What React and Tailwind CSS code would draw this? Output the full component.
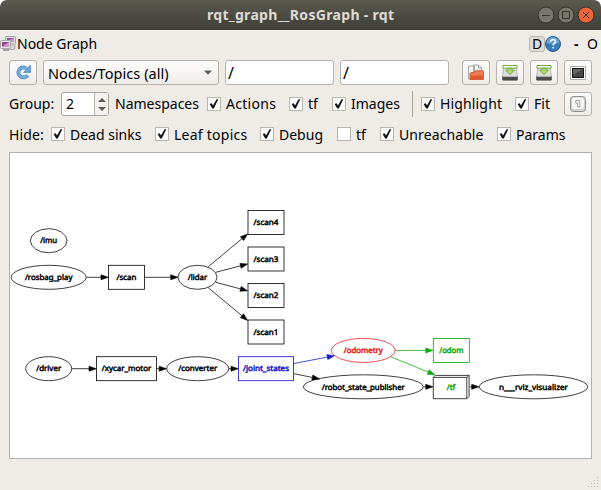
import React from 'react';

const BTN = 'flex h-[25px] w-7 shrink-0 items-center justify-center rounded-[3px] border border-[#b5b1ab] bg-gradient-to-b from-[#fdfdfc] to-[#efedea]';
const FIELD = 'flex h-[25px] shrink-0 items-center rounded-[3px] border border-[#b5b1ab] bg-white text-[16px]';

function Check({ label, className, on = true, text = '' }) {
  return (
    <label className={'flex shrink-0 items-center whitespace-nowrap ' + className}>
      <span className="mr-[5px] flex h-[14px] w-[14px] shrink-0 items-center justify-center border border-[#b9b5af] bg-white">
        {on && (
          <svg width="12" height="12" viewBox="0 0 12 12">
            <path d="M1.6 6 3.7 5.2 5 7.6 8.4 1.5 10.4 1 5.8 10.5H4.2Z" fill="#111" />
          </svg>
        )}
      </span>
      <span className={text}>{label}</span>
    </label>
  );
}

function SaveIcon() {
  return (
    <svg width="16" height="17" viewBox="0 0 16 17">
      <path d="M1.8 3.5h12.4l1.2 9H.6Z" fill="#dededc" stroke="#a0a09d" strokeWidth=".7" />
      <path d="M.5 12.4h15v3q0 .9-.9.9H1.4q-.9 0-.9-.9Z" fill="#4b4d4b" stroke="#3b3d3b" strokeWidth=".5" />
      <path d="M.8 12.2h14.4" stroke="#f7f7f7" strokeWidth=".8" />
      <path d="M1 1.5h14v2.6H1Z" fill="#fff" stroke="#72aa3e" strokeWidth="1" />
      <path d="M6 4.1h4v2h2.4L8 10.8 3.6 6.1H6Z" fill="#acd66a" stroke="#69a53a" strokeWidth=".8" />
    </svg>
  );
}

const nodes = [
  ['/imu', 'e', 48.7, 240.7, 18.3, 17],
  ['/rosbag_play', 'e', 48.7, 277.3, 37.5, 47.5],
  ['/scan', 'r', 126.5, 277.3, 18, 20],
  ['/lidar', 'e', 197.5, 277.3, 19.5, 19.5],
  ['/scan4', 'r', 266, 222.5, 18, 25],
  ['/scan3', 'r', 266, 259, 18, 25],
  ['/scan2', 'r', 266, 295.5, 18, 25],
  ['/scan1', 'r', 266, 332, 18, 25],
  ['/driver', 'e', 48.7, 368.7, 23, 25],
  ['/xycar_motor', 'r', 126.5, 368.7, 30, 49.5],
  ['/converter', 'e', 197.7, 368.7, 31, 39],
  ['/joint_states', 'r', 266, 368.7, 27.5, 46, '#1010c8'],
  ['/odometry', 'e', 363.3, 350.4, 31.8, 39, '#f01818'],
  ['/robot_state_publisher', 'e', 363.3, 386.8, 60, 83],
  ['/odom', 'r', 451.3, 350.4, 18, 24, '#08a808'],
  ['n___rviz_visualizer', 'e', 533.5, 386.8, 54.3, 69],
];

const edges = [
  [86.5, 277.3, 108.3, 277.3],
  [144.5, 277.3, 178, 277.3],
  [208.3, 266.7, 247.6, 234],
  [215.8, 272.3, 247.6, 264],
  [215.8, 282.3, 247.6, 290.8],
  [208.3, 287.8, 247.6, 320.4],
  [71.8, 368.7, 96.3, 368.7],
  [156.7, 368.7, 166.5, 368.7],
  [229, 368.7, 238.3, 368.7],
  [293.5, 363.6, 334.5, 355.7, '#1010c8'],
  [293.5, 373.6, 319.5, 378.9],
  [395.3, 350.4, 433, 350.4, '#08a808'],
  [390.5, 356.7, 435, 374.8, '#08a808'],
  [423.5, 386.8, 433, 386.8],
  [469.5, 386.8, 479, 386.8],
];

function Edge({ x1, y1, x2, y2, color }) {
  const d = Math.hypot(x2 - x1, y2 - y1);
  const ux = (x2 - x1) / d;
  const uy = (y2 - y1) / d;
  const bx = x2 - ux * 7.3;
  const by = y2 - uy * 7.3;
  return (
    <g stroke={color} fill={color} strokeWidth=".75">
      <line x1={x1} y1={y1} x2={bx} y2={by} />
      <polygon strokeWidth=".6" points={`${x2},${y2} ${bx - uy * 2.5},${by + ux * 2.5} ${bx + uy * 2.5},${by - ux * 2.5}`} />
    </g>
  );
}

function Graph() {
  return (
    <svg className="block" width="581" height="305" viewBox="10 153 581 305" textRendering="geometricPrecision">
      {edges.map(([x1, y1, x2, y2, c = '#000'], i) => (
        <Edge key={i} x1={x1} y1={y1} x2={x2} y2={y2} color={c} />
      ))}
      <path d="M433.3 377.4h33.5v21.3h-33.5ZM433.3 377.4l2-2h33.8v21.2l-2.2 2.1M466.8 377.4l2.3-2" fill="none" stroke="#111" strokeWidth=".8" />
      <text x="451" y="389.5" textAnchor="middle" textLength="8.5" lengthAdjust="spacingAndGlyphs" fontSize="7.8" fill="#08a808" stroke="#08a808" strokeWidth=".45">/tf</text>
      {nodes.map(([t, s, x, y, r, w, c = '#000']) => (
        <g key={t}>
          {s === 'e' ? (
            <ellipse cx={x} cy={y} rx={r} ry="12" fill="none" stroke={c} strokeWidth=".75" />
          ) : (
            <rect x={x - r} y={y - 12} width={r * 2} height="24" fill="none" stroke={c} strokeWidth=".8" />
          )}
          <text x={x} y={y + 2.7} textAnchor="middle" textLength={w} lengthAdjust="spacingAndGlyphs" fontSize="7.8" fill={c} stroke={c} strokeWidth=".45">{t}</text>
        </g>
      ))}
    </svg>
  );
}

export default function App() {
  return (
    <div className="flex h-[490px] w-[601px] flex-col overflow-hidden rounded-t-[7px] bg-[#efebe7] font-['Noto_Sans','Open_Sans',sans-serif] text-[14px] leading-5 text-black">
      <header className="flex h-[30px] shrink-0 items-center bg-gradient-to-b from-[#5b5a50] to-[#3f3e38] pr-[6px]">
        <h1 className="ml-[207px] w-[187px] whitespace-nowrap text-[14px] font-bold tracking-[0.32px] text-[#dfdbd2]">rqt_graph__RosGraph - rqt</h1>
        <svg className="ml-auto" width="58" height="18" viewBox="538 6 58 18">
          <g stroke="#34332e" strokeWidth="1">
            <circle cx="547" cy="15" r="8" fill="#77756c" />
            <circle cx="567" cy="15" r="8" fill="#77756c" />
            <circle cx="587" cy="15" r="8" fill="#ee6338" />
            <path d="M543 15.5h8M563.5 11.5h7v7h-7ZM584 12l6 6M590 12l-6 6" fill="none" />
          </g>
        </svg>
      </header>

      <div className="flex h-[30px] shrink-0 items-center pb-[3px]">
        <svg width="17" height="17" viewBox="0 0 17 17">
          <rect x="5.5" y="1.5" width="10" height="8" rx="1" fill="#dedbdd" stroke="#aaa5a9" />
          <path d="M7 3h7v4H7Z" fill="#9a579b" />
          <path d="M8.5 5.5 14 3v4H8.5Z" fill="#c79bc8" />
          <rect x="8.5" y="9" width="6.5" height="5.5" rx="2" fill="#d8d6d5" stroke="#aaa" />
          <rect x=".5" y="5.5" width="10" height="8" rx="1" fill="#e9e6e8" stroke="#a7a2a6" />
          <path d="M2 7h7v4.5H2Z" fill="#8d478e" />
          <path d="M3.5 10.5 9 7v4.5H3.5Z" fill="#c795c8" />
          <path d="M3 15h6" stroke="#8d8a8b" strokeWidth="1.5" />
        </svg>
        <span className="w-[90px] whitespace-nowrap">Node Graph</span>
        <span className="ml-auto flex h-4 w-4 items-center justify-center rounded-[3px] border border-[#bbb7b2] bg-[#dfdcd8] text-[14px]">D</span>
        <svg width="16" height="16" viewBox="0 0 16 16">
          <circle cx="8" cy="8" r="7.5" fill="#397bb9" stroke="#285d92" />
          <path d="M1.5 7a6.5 6 0 0 1 13 0Q8 9 1.5 7Z" fill="#6ba2d3" />
          <path d="M5.6 5.8Q5.7 3.5 8.1 3.5t2.4 2.2c0 1.7-2.4 1.6-2.4 3.8M8.1 11v1.5" fill="none" stroke="#fff" strokeWidth="1.5" />
        </svg>
        <span className="ml-[13px] w-[13px] font-bold">-</span>
        <span className="w-[14px]">O</span>
      </div>

      <div className="flex h-[25px] shrink-0 items-center gap-[6px] pl-[9px]">
        <button className={BTN}>
          <svg width="17" height="17" viewBox="0 0 17 17">
            <path d="M12.6 11.2A5 5 0 1 1 11.6 4.6" fill="none" stroke="#4e87c0" strokeWidth="3.8" />
            <path d="M15.5 1.2v7.2H8.6Z" fill="#68a2d8" stroke="#4e87c0" strokeWidth=".8" />
            <path d="M12.6 11.2A5 5 0 1 1 11.6 4.6" fill="none" stroke="#78ade0" strokeWidth="2.2" />
          </svg>
        </button>
        <button className={FIELD + ' w-44 justify-between bg-gradient-to-b from-[#fdfdfc] to-[#efedea] pr-[6px] pl-[4px]'}>
          <span className="whitespace-nowrap text-[14.5px] tracking-[0.06px]">Nodes/Topics (all)</span>
          <svg width="8" height="5" viewBox="0 0 8 5"><path d="M0 .5h8L4 4.8Z" fill="#5a5955" /></svg>
        </button>
        <div className={FIELD + ' w-[109px] pl-[2px]'}>/</div>
        <div className={FIELD + ' w-[109px] pl-[2px]'}>/</div>
        <button className={BTN + ' ml-[7px]'}>
          <svg width="18" height="18" viewBox="0 0 18 18">
            <path d="M1.5 2h6v13h-6ZM6.5 1h5l3 3v8h-8Z" fill="#f4f4f3" stroke="#969694" strokeWidth=".8" />
            <path d="M11.5 1v3h3" fill="none" stroke="#969694" strokeWidth=".8" />
            <path d="M3 15.5V9.5l.8-.9h3.4l1-1.8h7.6l.7.9v7.8Z" fill="#ef7b50" stroke="#cb4b25" strokeWidth=".8" />
            <path d="M3.5 15V11.5H16V15Z" fill="#df5930" />
          </svg>
        </button>
        <button className={BTN}><SaveIcon /></button>
        <button className={BTN}><SaveIcon /></button>
        <button className={BTN}>
          <svg width="16" height="14" viewBox="0 0 16 14">
            <path d="M.5.5h15v13H.5Z" fill="#fff" stroke="#aaa" />
            <path d="M2.5 2.5h11v9h-11Z" fill="#464646" stroke="#111" />
            <path d="M3 3h10L3 9Z" fill="#686868" />
          </svg>
        </button>
      </div>

      <div className="mt-[6px] flex h-[26px] shrink-0 items-center pl-[9px]">
        <span className="w-[52px]">Group:</span>
        <div className="flex h-6 w-12 rounded-[3px] border border-[#aaa69f] bg-white">
          <span className="flex w-8 items-center pl-1">2</span>
          <span className="flex flex-1 flex-col items-center justify-center gap-[5px] border-l border-[#b5b1ab] bg-[#f5f3f1]">
            <svg width="8" height="4" viewBox="0 0 8 4"><path d="M0 4h8L4 0Z" fill="#5a5955" /></svg>
            <svg width="8" height="4" viewBox="0 0 8 4"><path d="M0 0h8L4 4Z" fill="#5a5955" /></svg>
          </span>
        </div>
        <span className="ml-[6px] w-[92px] whitespace-nowrap">Namespaces</span>
        <div className="flex items-center">
          <Check label="Actions" className="w-[82px]" text="tracking-[0.3px]" />
          <Check label="tf" className="w-[43px]" />
          <Check label="Images" className="w-[80px]" />
        </div>
        <span className="h-[26px] w-px bg-[#aaa69f]" />
        <Check label="Highlight" className="ml-2 w-[94px]" text="tracking-[0.15px]" />
        <Check label="Fit" className="w-[49px]" />
        <button className="flex h-6 w-7 items-center justify-center rounded-[3px] border border-[#b5b1ab] bg-gradient-to-b from-[#fdfdfc] to-[#efedea]">
          <svg width="16" height="16" viewBox="0 0 16 16">
            <rect x=".5" y=".5" width="15" height="15" rx="3" fill="#d2d2d0" stroke="#8f8f8c" />
            <rect x="2" y="1.5" width="12" height="11.5" rx="2" fill="#fafafa" />
            <path d="M5.8 4.5h4v6.5H7.6V7.2H5.8Z" fill="#fff" stroke="#858583" strokeWidth=".8" />
          </svg>
        </button>
      </div>

      <div className="mt-[5px] flex h-6 shrink-0 items-center pl-[9px]">
        <span className="w-[42px] pt-px tracking-[0.15px]">Hide:</span>
        <Check label="Dead sinks" className="w-[104px]" text="pt-px" />
        <Check label="Leaf topics" className="w-[105px]" text="pt-px tracking-[0.25px]" />
        <Check label="Debug" className="w-[77px]" text="pt-px" />
        <Check label="tf" on={false} className="w-[43px]" text="pt-px" />
        <Check label="Unreachable" className="w-[117px]" text="pt-px tracking-[0.1px]" />
        <Check label="Params" className="w-[80px]" text="pt-px" />
      </div>

      <main className="mt-[6px] ml-[9px] h-[307px] w-[583px] shrink-0 border border-[#b5b1ae] bg-white">
        <Graph />
      </main>
      <footer className="flex flex-1 items-end justify-end pr-[2px] pb-[2px]">
        <svg width="11" height="11" viewBox="0 0 11 11" fill="#bbb7b3">
          <path d="M9 0h1v1H9ZM6 3h1v1H6ZM9 3h1v1H9ZM3 6h1v1H3ZM6 6h1v1H6ZM9 6h1v1H9ZM0 9h1v1H0ZM3 9h1v1H3ZM6 9h1v1H6ZM9 9h1v1H9Z" />
        </svg>
      </footer>
    </div>
  );
}
